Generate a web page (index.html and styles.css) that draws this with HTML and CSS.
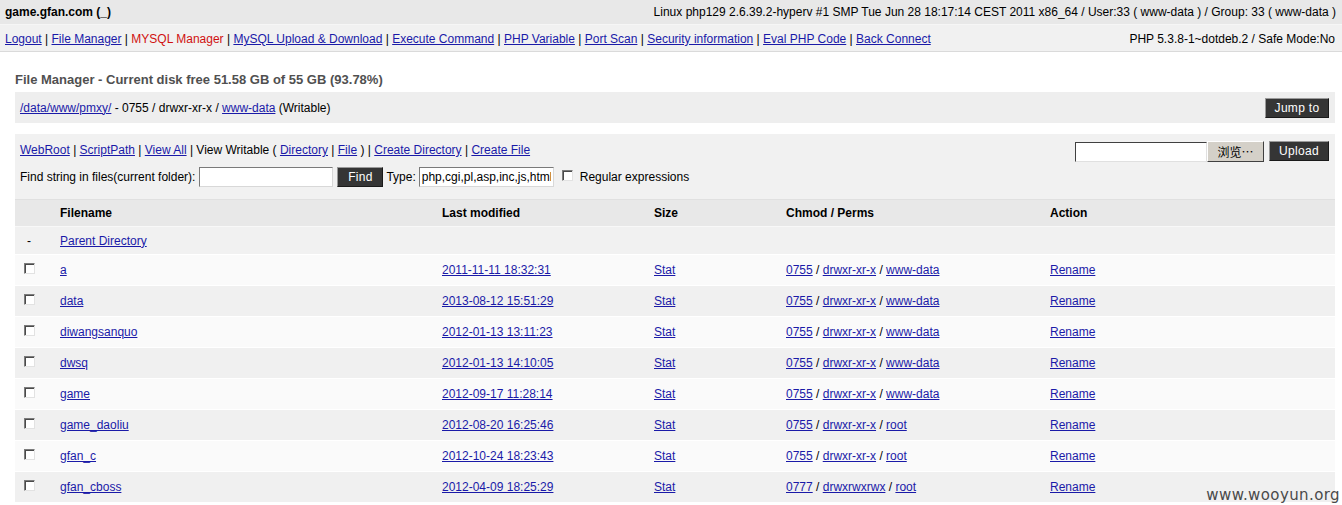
FILE: index.html
```html
<!DOCTYPE html>
<html>
<head>
<meta charset="utf-8">
<title>game.gfan.com</title>
<link rel="stylesheet" href="styles.css">
</head>
<body>
<div class="head">
  <b>game.gfan.com (_)</b>
  <span>Linux php129 2.6.39.2-hyperv #1 SMP Tue Jun 28 18:17:14 CEST 2011 x86_64 / User:33 ( www-data ) / Group: 33 ( www-data )</span>
</div>
<div class="nav">
  <span><a href="#">Logout</a> | <a href="#">File Manager</a> | <a href="#" class="red">MYSQL Manager</a> | <a href="#">MySQL Upload &amp; Download</a> | <a href="#">Execute Command</a> | <a href="#">PHP Variable</a> | <a href="#">Port Scan</a> | <a href="#">Security information</a> | <a href="#">Eval PHP Code</a> | <a href="#">Back Connect</a></span>
  <span>PHP 5.3.8-1~dotdeb.2 / Safe Mode:No</span>
</div>
<div class="main">
  <h2 class="title">File Manager - Current disk free 51.58 GB of 55 GB (93.78%)</h2>
  <div class="pathbox">
    <span><a href="#">/data/www/pmxy/</a> - 0755 / drwxr-xr-x / <a href="#">www-data</a> (Writable)</span>
    <button class="dark jump">Jump to</button>
  </div>
  <div class="toolbox">
    <div class="toolleft">
      <div class="links"><a href="#">WebRoot</a> | <a href="#">ScriptPath</a> | <a href="#">View All</a> | View Writable ( <a href="#">Directory</a> | <a href="#">File</a> ) | <a href="#">Create Directory</a> | <a href="#">Create File</a></div>
      <div class="find">
        <span>Find string in files(current folder):</span>
        <input type="text" class="findin">
        <button class="dark findbtn">Find</button>
        <span>Type:</span>
        <input type="text" class="typein" value="php,cgi,pl,asp,inc,js,html,htm">
        <input type="checkbox" class="cb">
        <span>Regular expressions</span>
      </div>
    </div>
    <div class="upload">
      <input type="text" class="filetext"><button class="browse">浏览…</button>
      <button class="dark upbtn">Upload</button>
    </div>
  </div>
  <table class="files">
    <colgroup><col class="c0"><col class="c1"><col class="c2"><col class="c3"><col class="c4"><col></colgroup>
    <thead>
      <tr><th></th><th>Filename</th><th>Last modified</th><th>Size</th><th>Chmod / Perms</th><th>Action</th></tr>
    </thead>
    <tbody>
      <tr class="parent"><td class="dash">-</td><td><a href="#">Parent Directory</a></td><td></td><td></td><td></td><td></td></tr>
      <tr class="odd"><td><input type="checkbox" class="cb"></td><td><a href="#">a</a></td><td><a href="#">2011-11-11 18:32:31</a></td><td><a href="#">Stat</a></td><td><a href="#">0755</a> / <a href="#">drwxr-xr-x</a> / <a href="#">www-data</a></td><td><a href="#">Rename</a></td></tr>
      <tr class="even"><td><input type="checkbox" class="cb"></td><td><a href="#">data</a></td><td><a href="#">2013-08-12 15:51:29</a></td><td><a href="#">Stat</a></td><td><a href="#">0755</a> / <a href="#">drwxr-xr-x</a> / <a href="#">www-data</a></td><td><a href="#">Rename</a></td></tr>
      <tr class="odd"><td><input type="checkbox" class="cb"></td><td><a href="#">diwangsanquo</a></td><td><a href="#">2012-01-13 13:11:23</a></td><td><a href="#">Stat</a></td><td><a href="#">0755</a> / <a href="#">drwxr-xr-x</a> / <a href="#">www-data</a></td><td><a href="#">Rename</a></td></tr>
      <tr class="even"><td><input type="checkbox" class="cb"></td><td><a href="#">dwsq</a></td><td><a href="#">2012-01-13 14:10:05</a></td><td><a href="#">Stat</a></td><td><a href="#">0755</a> / <a href="#">drwxr-xr-x</a> / <a href="#">www-data</a></td><td><a href="#">Rename</a></td></tr>
      <tr class="odd"><td><input type="checkbox" class="cb"></td><td><a href="#">game</a></td><td><a href="#">2012-09-17 11:28:14</a></td><td><a href="#">Stat</a></td><td><a href="#">0755</a> / <a href="#">drwxr-xr-x</a> / <a href="#">www-data</a></td><td><a href="#">Rename</a></td></tr>
      <tr class="even"><td><input type="checkbox" class="cb"></td><td><a href="#">game_daoliu</a></td><td><a href="#">2012-08-20 16:25:46</a></td><td><a href="#">Stat</a></td><td><a href="#">0755</a> / <a href="#">drwxr-xr-x</a> / <a href="#">root</a></td><td><a href="#">Rename</a></td></tr>
      <tr class="odd"><td><input type="checkbox" class="cb"></td><td><a href="#">gfan_c</a></td><td><a href="#">2012-10-24 18:23:43</a></td><td><a href="#">Stat</a></td><td><a href="#">0755</a> / <a href="#">drwxr-xr-x</a> / <a href="#">root</a></td><td><a href="#">Rename</a></td></tr>
      <tr class="even"><td><input type="checkbox" class="cb"></td><td><a href="#">gfan_cboss</a></td><td><a href="#">2012-04-09 18:25:29</a></td><td><a href="#">Stat</a></td><td><a href="#">0777</a> / <a href="#">drwxrwxrwx</a> / <a href="#">root</a></td><td><a href="#">Rename</a></td></tr>
    </tbody>
  </table>
</div>
<div class="watermark">www.wooyun.org</div>
</body>
</html>
```

FILE: styles.css
```css
html, body {
  margin: 0;
  padding: 0;
  background: #fff;
  font-family: "Liberation Sans", Arial, "Noto Sans CJK SC", sans-serif;
  font-size: 12px;
  color: #000;
  overflow: hidden;
}
a { color: #1a1aa8; text-decoration: underline; }
a.red { color: #d01010; text-decoration: none; }

.head {
  height: 24px;
  background: #e8e8e8;
  border-bottom: 1px solid #f6f6f6;
  display: flex;
  justify-content: space-between;
  align-items: center;
  padding: 0 6px 0 5px;
}
.head b { font-weight: bold; }

.nav {
  height: 24px;
  padding-top: 2px;
  box-sizing: content-box;
  background: #f1f1f1;
  border-bottom: 1px solid #dadada;
  display: flex;
  justify-content: space-between;
  align-items: center;
  padding-left: 5px;
  padding-right: 7px;
}

.main {
  margin: 0 7px 0 15px;
}
.title {
  margin: 0;
  padding-top: 20px;
  height: 20px;
  line-height: 16px;
  font-size: 13px;
  font-weight: bold;
  color: #505050;
}

.pathbox {
  height: 31px;
  background: #eeeeee;
  display: flex;
  justify-content: space-between;
  align-items: center;
  padding: 0 6px 0 5px;
  margin-bottom: 11px;
}
.pathbox .jump { margin-top: 0; }

button.dark {
  background: #353535;
  color: #fff;
  font-family: "Liberation Sans", Arial, sans-serif;
  font-size: 12px;
  border: 1px solid;
  border-color: #9a9a9a #1a1a1a #1a1a1a #9a9a9a;
  padding: 0;
  height: 20px;
  letter-spacing: 0.3px;
}
.jump { width: 64px; height: 20px; }

.toolbox {
  height: 65px;
  background: #f1f1f1;
  display: flex;
  justify-content: space-between;
  padding: 0 6px 0 5px;
}
.toolleft { padding-top: 9px; }
.links { height: 18px; line-height: 14px; }
.find {
  display: flex;
  align-items: center;
  height: 22px;
  margin-top: 5px;
}
.find > * { flex: none; }
.findin {
  width: 130px;
  height: 16px;
  margin: 0 4px 0 4px;
  border: 1px solid;
  border-color: #7a7a7a #d8d8d8 #d8d8d8 #7a7a7a;
  padding: 1px;
  background: #fff;
}
.findbtn { width: 46px; height: 20px; margin-right: 3px; }
.typein {
  width: 129px;
  height: 16px;
  margin: 0 0 0 3px;
  border: 1px solid;
  border-color: #7a7a7a #d8d8d8 #d8d8d8 #7a7a7a;
  padding: 1px 2px;
  font-family: "Liberation Sans", Arial, sans-serif;
  font-size: 12px;
  background: #fff;
  overflow: hidden;
}
.find .cb { margin: 0 7px 4px 8px; }

input.cb {
  appearance: none;
  -webkit-appearance: none;
  width: 11px;
  height: 11px;
  margin: 0;
  border: 1px solid;
  border-color: #7c7c7c #e2e2e2 #e2e2e2 #7c7c7c;
  box-shadow: inset 1px 1px 0 #4a4a4a;
  background: #fff;
  vertical-align: middle;
}

.upload {
  display: flex;
  align-items: flex-start;
  padding-top: 7px;
}
.filetext {
  width: 128px;
  height: 16px;
  border: 1px solid;
  border-color: #404040 #e0e0e0 #e0e0e0 #404040;
  padding: 1px;
  margin: 1px 0 0 0;
  background: #fff;
}
.browse {
  width: 57px;
  height: 21px;
  background: #d4d0c8;
  border: 1px solid;
  border-color: #ffffff #404040 #404040 #ffffff;
  font-family: "Noto Sans CJK SC", "Liberation Sans", sans-serif;
  font-size: 12px;
  padding: 0;
  margin: 0 5px 0 0;
  line-height: 18px;
}
.upbtn { width: 60px; height: 20px; }

table.files {
  width: 100%;
  border-collapse: collapse;
  table-layout: fixed;
}
col.c0 { width: 45px; }
col.c1 { width: 382px; }
col.c2 { width: 212px; }
col.c3 { width: 132px; }
col.c4 { width: 264px; }

.files th {
  text-align: left;
  font-weight: bold;
  height: 26px;
  padding: 0;
  background: #e8e8e8;
  border-top: 1px solid #e0e0e0;
  border-bottom: 1px solid #f8f8f8;
}
.files td {
  padding: 0;
  height: 30px;
  border-top: 1px solid #dcdcdc;
  border-bottom: 1px solid #ffffff;
}
.files td:first-child { padding-left: 9px; }
.files tr.parent td { height: 27px; background: #f1f1f1; border-top: 0; }
.files tr.odd td { background: #fafafa; }
.files tr.even td { background: #f0f0f0; }
.files td.dash { padding-left: 12px; color: #000; }
.files td .cb { margin-top: -4px; }

.watermark {
  position: absolute;
  right: 2px;
  bottom: 1px;
  font-family: "DejaVu Sans", "Liberation Sans", sans-serif;
  font-size: 15px;
  color: #4a4a4a;
  letter-spacing: 0.4px;
}
```
